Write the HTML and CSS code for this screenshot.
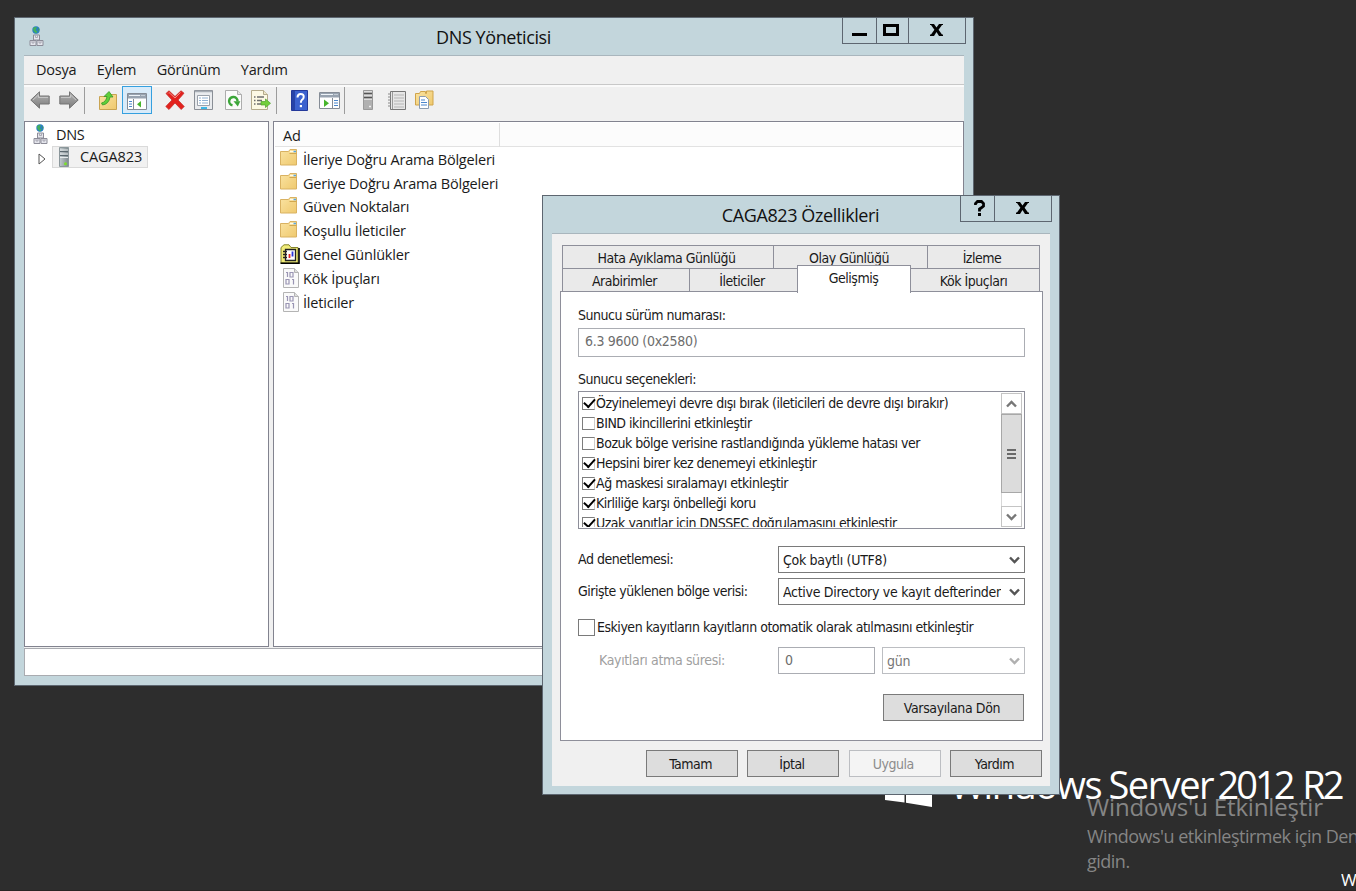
FILE: index.html
```
<!DOCTYPE html>
<html lang="tr">
<head>
    <meta charset="UTF-8">
    <meta name="viewport" content="width=device-width, initial-scale=1.0">
    <title>DNS Yöneticisi</title>
    <link rel="stylesheet" href="styles.css">
</head>
<body>
    <!-- shared icons -->
    <svg class="defs" width="0" height="0">
        <defs>
            <linearGradient id="gold" x1="0" y1="0" x2="1" y2="1">
                <stop offset="0" stop-color="#fae3a2"/>
                <stop offset="1" stop-color="#efc96e"/>
            </linearGradient>
            <linearGradient id="steel" x1="0" y1="0" x2="1" y2="0">
                <stop offset="0" stop-color="#c3cbce"/>
                <stop offset="1" stop-color="#7e898d"/>
            </linearGradient>
            <linearGradient id="grey" x1="0" y1="0" x2="0" y2="1">
                <stop offset="0" stop-color="#b4b4b4"/>
                <stop offset="1" stop-color="#7c7c7c"/>
            </linearGradient>
        </defs>
        <symbol id="i-dns" viewBox="0 0 16 20">
            <circle cx="7" cy="4" r="3.7" fill="#2a7fc4"/>
            <path d="M4 2.400Q6 0 8 1.600L6.600 4 8.500 5.500 7 7.600 4.500 5Z" fill="#43b05c"/>
            <path d="M9 2l1.500 1.500-1 2Z" fill="#3f9f58"/>
            <path d="M4.500 9h6v5h-6ZM1 14.500h6v5H1ZM8 14.500h6v5H8Z" fill="#e4e5ec" stroke="#8c8c98"/>
            <path d="M6.500 9.500v2h2v-2M3 15v2h2v-2M10 15v2h2v-2" fill="none" stroke="#9a9aa6" stroke-width=".8"/>
        </symbol>
        <symbol id="i-folder" viewBox="0 0 18 17">
            <path d="M.5 2.500h8l1.500-2h6.500v15.500H.5Z" fill="url(#gold)" stroke="#d9b262"/>
            <path d="M9.500 4.500h7" stroke="#d2a84f"/>
            <path d="M10 2.500h6" stroke="#fffbe8" stroke-width="1.500"/>
            <path d="M13.500 2.500h2.500" stroke="#5aa7dd" stroke-width="1.500"/>
        </symbol>
        <symbol id="i-server" viewBox="0 0 14 20">
            <path d="M2.500.5h9v19h-9Z" fill="url(#steel)" stroke="#8b979b"/>
            <path d="M3 4.500h8M3 8.500h8" stroke="#5b686e"/>
            <path d="M3 3h8M3 7h8M3 10.500h8" stroke="#e6ebec"/>
            <circle cx="8.500" cy="16.800" r="1.500" fill="#7be02a"/>
        </symbol>
        <symbol id="i-doc" viewBox="0 0 16 20">
            <path d="M.5.5h11l4 4v15H.5Z" fill="#fafafa" stroke="#b4b4b4"/>
            <path d="M11.500.5v4h4" fill="#dedede" stroke="#b4b4b4"/>
            <path d="M3 4.500h1.500v4.500M7 4.500h3v4.500h-3ZM3 11.500h3v4.500H3ZM9 11.500h1.500v5" fill="none" stroke="#9a95b4" stroke-width="1.200"/>
        </symbol>
        <symbol id="i-log" viewBox="0 0 20 20">
            <path d="M1 3.500 4 .8h5l2 2.700h7V19H1Z" fill="#f1ec7a" stroke="#85852a"/>
            <path d="M.5 19.200h18.500V4" fill="none" stroke="#000" stroke-width="1.600"/>
            <path d="M5.500 5.500h10v11h-10Z" fill="#fff" stroke="#222" stroke-width="1.300"/>
            <path d="M3 7.500h4M3 10.500h4M3 13.500h4" stroke="#222" stroke-width="1.300"/>
            <path d="M9.500 10v4" stroke="#e02424" stroke-width="1.800"/>
            <path d="M12.500 7.500v5" stroke="#2b35d8" stroke-width="1.800"/>
        </symbol>
        <symbol id="i-arrow" viewBox="0 0 20 18">
            <path d="M.8 9 9.500.8v4.200h9.700v8H9.500v4.200Z" fill="url(#grey)" stroke="#747474"/>
            <path d="M3 9 8.500 4v2.500h9.500" fill="none" stroke="#c4c4c4"/>
        </symbol>
        <symbol id="i-chev" viewBox="0 0 11 8">
            <path d="M1 1.500 5.500 6 10 1.500" fill="none" stroke="currentColor" stroke-width="2.400"/>
        </symbol>
        <symbol id="i-x" viewBox="0 0 13 12">
            <path d="M0 0h4l2.500 3.500L9 0h4v1h-1L8.600 5.800 12 10.500h1V12H9L6.500 8 4 12H0v-1.500h1L4.400 5.800 1 1H0Z" fill="#000"/>
        </symbol>
    </svg>

    <div class="desktop">
        <div class="brand">
            <svg class="flag" width="48" height="48" viewBox="0 0 48 48">
                <path d="M0 6.500 19.500 4v19H0ZM21 3.800 47 0v23H21ZM0 24.500h19.500v19L0 41ZM21 24.500h26V48l-26-4.200Z" fill="#fff"/>
            </svg>
            <span class="brand-name">Windows Server <span class="brand-year">2012 R2</span></span>
        </div>
        <div class="activate">
            <div class="activate-title">Windows'u Etkinleştir</div>
            <div class="activate-text">Windows'u etkinleştirmek için Denetim</div>
            <div class="activate-text">gidin.</div>
        </div>
        <div class="build">Windows</div>
    </div>

    <div class="window main-window">
        <div class="titlebar">
            <svg class="title-icon" width="16" height="20"><use href="#i-dns"/></svg>
            <span class="title">DNS Yöneticisi</span>
            <div class="caption-buttons">
                <button class="cap cap-min"><svg width="15" height="12"><path d="M0 10.500h15" stroke="#000" stroke-width="3"/></svg></button>
                <button class="cap cap-max"><svg width="16" height="12"><path d="M1.500 1.500h13v9h-13Z" fill="none" stroke="#000" stroke-width="3"/></svg></button>
                <button class="cap cap-close"><svg width="13" height="12"><use href="#i-x"/></svg></button>
            </div>
        </div>
        <div class="client">
            <div class="menubar">
                <span>Dosya</span>
                <span>Eylem</span>
                <span>Görünüm</span>
                <span>Yardım</span>
            </div>
            <div class="toolbar">
                <div class="tool"><svg width="20" height="18"><use href="#i-arrow"/></svg></div>
                <div class="tool flip"><svg width="20" height="18"><use href="#i-arrow"/></svg></div>
                <div class="sep"></div>
                <div class="tool tool-up">
                    <svg width="18" height="19" viewBox="0 0 18 19">
                        <path d="M.5 5.500h8l2-2h7v15H.5Z" fill="url(#gold)" stroke="#c9a452"/>
                        <path d="M2.500 12Q7 11 8 5.500H5L10 .5l4 5.500h-3Q10 13 3.500 14Z" fill="#5fd038" stroke="#39962a" stroke-width=".8"/>
                    </svg>
                </div>
                <div class="tool tool-on">
                    <svg width="20" height="17" viewBox="0 0 20 17">
                        <path d="M.5.5h19v16H.5Z" fill="#fff" stroke="#858c96"/>
                        <path d="M1 1h18v4.500H1Z" fill="#98a3b0"/>
                        <path d="M2 2.500h11M14.500 2.500h1M16.500 2.500h1" stroke="#eef3f8"/>
                        <path d="M6.500 6v10" stroke="#858c96"/>
                        <path d="M2 8.500h3M2 11h3M2 13.500h3" stroke="#4b86cc" stroke-width="1.200"/>
                        <path d="M14 8v6.500l-4-3.200Z" fill="#47b52c"/>
                    </svg>
                </div>
                <div class="tool tool-del">
                    <svg width="20" height="20" viewBox="0 0 20 20"><path d="M1 3.500 4 .8 10 6.500 16 .8l3 2.400L13 10l6.200 6.500-3 3L10 13l-6 6.500-3.200-3L7 10Z" fill="#e3211d" stroke="#c5302c" stroke-width=".8"/><path d="M3 3.500 4 2.500 10 8 15.500 2.500" fill="none" stroke="#f28a84"/></svg>
                </div>
                <div class="tool tool-prop">
                    <svg width="19" height="20" viewBox="0 0 19 20">
                        <path d="M.5.5h18v19H.5Z" fill="#e9ebee" stroke="#8a8f96"/>
                        <path d="M1 1.500h17" stroke="#a7adb5" stroke-width="1.500"/>
                        <path d="M3.500 5.500h12v10h-12Z" fill="#fff" stroke="#9aa1aa"/>
                        <path d="M5 8h2M8 8h6M5 10.500h2M8 10.500h6M5 13h2M8 13h6" stroke="#8fb0d2"/>
                        <path d="M7 18h6" stroke="#3bb6e6" stroke-width="2"/>
                    </svg>
                </div>
                <div class="tool tool-ref">
                    <svg width="17" height="20" viewBox="0 0 17 20">
                        <path d="M.5.5h12l4 4v15H.5Z" fill="#fbfbfb" stroke="#adadad"/>
                        <path d="M12.500.5v4h4" fill="#e4e4e4" stroke="#adadad"/>
                        <path d="M7.500 15.300A4.200 4.200 0 1 1 12.500 11.500" fill="none" stroke="#3da63a" stroke-width="2.500"/>
                        <path d="M8.500 11.200h6.800L12.800 16.500Z" fill="#3da63a"/>
                    </svg>
                </div>
                <div class="tool tool-exp">
                    <svg width="20" height="20" viewBox="0 0 20 20">
                        <path d="M.5.5h12l4 4v15H.5Z" fill="#fdf9e4" stroke="#b5ab8c"/>
                        <path d="M12.500.5v4h4" fill="#eee6c8" stroke="#b5ab8c"/>
                        <path d="M3 7h1.500M6 7h7M3 10.500h1.500M6 10.500h5M3 14h1.500M6 14h5" stroke="#6d6d6d" stroke-width="1.300"/>
                        <path d="M10 11.500h4.500V9l5 4.300-5 4.200V15H10Z" fill="#74cf3a" stroke="#4ea22a" stroke-width=".7"/>
                    </svg>
                </div>
                <div class="sep"></div>
                <div class="tool tool-help">
                    <svg width="17" height="21" viewBox="0 0 17 21">
                        <path d="M.5.5h16v20H.5Z" fill="#3c62cf" stroke="#24399a"/>
                        <path d="M1 1h3v19H1Z" fill="#2743a8"/>
                        <path d="M6.500 7.500q0-3.500 3.200-3.500t3 3q0 2-2 3.200-.8.600-.8 2.600" fill="none" stroke="#fff" stroke-width="2"/>
                        <path d="M8.800 15h2.200v2.200H8.800Z" fill="#fff"/>
                    </svg>
                </div>
                <div class="tool tool-act">
                    <svg width="21" height="17" viewBox="0 0 21 17">
                        <path d="M.5.5h20v16H.5Z" fill="#fff" stroke="#858c96"/>
                        <path d="M1 1h19v4.500H1Z" fill="#98a3b0"/>
                        <path d="M2 2.500h12M15.500 2.500h1M17.500 2.500h1" stroke="#eef3f8"/>
                        <path d="M13.500 6v10" stroke="#858c96"/>
                        <path d="M15 8.500h4M15 11h4M15 13.500h4" stroke="#4b86cc" stroke-width="1.200"/>
                        <path d="M5 7.500V15l5-3.700Z" fill="#47b52c"/>
                    </svg>
                </div>
                <div class="sep sep-3"></div>
                <div class="tool tool-srv">
                    <svg width="12" height="20" viewBox="0 0 12 20">
                        <path d="M1.500.5h9v19h-9Z" fill="#b0b0b0" stroke="#999"/>
                        <path d="M2 3.500h8M2 7.500h8" stroke="#555"/>
                        <path d="M2 1.500h8M2 5.500h8M2 9.500h8" stroke="#ddd"/>
                        <path d="M7 16.500h2" stroke="#eee" stroke-width="1.500"/>
                    </svg>
                </div>
                <div class="tool tool-book">
                    <svg width="18" height="19" viewBox="0 0 18 19">
                        <path d="M2.500.5h15v18h-15Z" fill="#e6e6e6" stroke="#777"/>
                        <path d="M4.500 1v17" stroke="#999"/>
                        <path d="M6 4h10M6 7h10M6 10h10M6 13h10M6 16h10" stroke="#b4b4b4"/>
                        <path d="M0 3h3M0 6h3M0 9h3M0 12h3M0 15h3" stroke="#888"/>
                    </svg>
                </div>
                <div class="tool tool-copy">
                    <svg width="19" height="20" viewBox="0 0 19 20">
                        <path d="M.5 3.500h4l1-2h5v2h1V1h6.500v14H.5Z" fill="url(#gold)" stroke="#d0a44a"/>
                        <path d="M4.500 6.500h6l3 3v9h-9Z" fill="#fff" stroke="#8b9cb0"/>
                        <path d="M6 10h4M6 12.500h6M6 15h6" stroke="#4b86cc" stroke-width="1.200"/>
                    </svg>
                </div>
            </div>
            <div class="panes">
                <div class="tree">
                    <div class="tree-row">
                        <svg width="16" height="20"><use href="#i-dns"/></svg>
                        <span>DNS</span>
                    </div>
                    <div class="tree-row tree-child">
                        <svg class="expander" width="8" height="12" viewBox="0 0 8 12"><path d="M1 1v10l6-5Z" fill="#fff" stroke="#555"/></svg>
                        <div class="tree-sel">
                            <svg width="14" height="20"><use href="#i-server"/></svg>
                            <span>CAGA823</span>
                        </div>
                    </div>
                </div>
                <div class="list">
                    <div class="list-head"><span>Ad</span></div>
                    <div class="list-row"><svg width="18" height="17"><use href="#i-folder"/></svg><span>İleriye Doğru Arama Bölgeleri</span></div>
                    <div class="list-row"><svg width="18" height="17"><use href="#i-folder"/></svg><span>Geriye Doğru Arama Bölgeleri</span></div>
                    <div class="list-row"><svg width="18" height="17"><use href="#i-folder"/></svg><span>Güven Noktaları</span></div>
                    <div class="list-row"><svg width="18" height="17"><use href="#i-folder"/></svg><span>Koşullu İleticiler</span></div>
                    <div class="list-row"><svg class="log" width="20" height="20"><use href="#i-log"/></svg><span>Genel Günlükler</span></div>
                    <div class="list-row"><svg class="doc" width="16" height="20"><use href="#i-doc"/></svg><span>Kök İpuçları</span></div>
                    <div class="list-row"><svg class="doc" width="16" height="20"><use href="#i-doc"/></svg><span>İleticiler</span></div>
                </div>
            </div>
            <div class="statusbar"></div>
        </div>
    </div>

    <div class="window dialog">
        <div class="titlebar">
            <span class="title">CAGA823 Özellikleri</span>
            <div class="caption-buttons">
                <button class="cap cap-help"><svg width="11" height="16" viewBox="0 0 11 16"><path d="M1.500 5V3.500L3.500 1.500h4l2 2v2.500L7 8 5.500 9v2.500" fill="none" stroke="#000" stroke-width="2.800"/><path d="M4 13h3v3H4Z"/></svg></button>
                <button class="cap cap-close"><svg width="13" height="12"><use href="#i-x"/></svg></button>
            </div>
        </div>
        <div class="dialog-client">
            <div class="tabs">
                <div class="tab-row">
                    <div class="tab t1">Hata Ayıklama Günlüğü</div>
                    <div class="tab t2">Olay Günlüğü</div>
                    <div class="tab t3">İzleme</div>
                </div>
                <div class="tab-row">
                    <div class="tab t4">Arabirimler</div>
                    <div class="tab t5">İleticiler</div>
                    <div class="tab t6 active">Gelişmiş</div>
                    <div class="tab t7">Kök İpuçları</div>
                </div>
            </div>
            <div class="panel">
                <div class="label l1">Sunucu sürüm numarası:</div>
                <div class="field version">6.3 9600 (0x2580)</div>
                <div class="label l2">Sunucu seçenekleri:</div>
                <div class="listbox">
                    <div class="options">
                        <div class="option"><i class="box on"></i><span>Özyinelemeyi devre dışı bırak (ileticileri de devre dışı bırakır)</span></div>
                        <div class="option"><i class="box"></i><span>BIND ikincillerini etkinleştir</span></div>
                        <div class="option"><i class="box"></i><span>Bozuk bölge verisine rastlandığında yükleme hatası ver</span></div>
                        <div class="option"><i class="box on"></i><span>Hepsini birer kez denemeyi etkinleştir</span></div>
                        <div class="option"><i class="box on"></i><span>Ağ maskesi sıralamayı etkinleştir</span></div>
                        <div class="option"><i class="box on"></i><span>Kirliliğe karşı önbelleği koru</span></div>
                        <div class="option"><i class="box on"></i><span>Uzak yanıtlar için DNSSEC doğrulamasını etkinleştir</span></div>
                    </div>
                    <div class="scrollbar">
                        <div class="sb-btn"><svg class="up" width="11" height="8"><use href="#i-chev"/></svg></div>
                        <div class="sb-thumb"><i></i><i></i><i></i></div>
                        <div class="sb-track"></div>
                        <div class="sb-btn"><svg width="11" height="8"><use href="#i-chev"/></svg></div>
                    </div>
                </div>
                <div class="form-row r1">
                    <span class="form-label">Ad denetlemesi:</span>
                    <div class="combo"><span>Çok baytlı (UTF8)</span><svg width="11" height="8"><use href="#i-chev"/></svg></div>
                </div>
                <div class="form-row r2">
                    <span class="form-label">Girişte yüklenen bölge verisi:</span>
                    <div class="combo"><span>Active Directory ve kayıt defterinden</span><svg width="11" height="8"><use href="#i-chev"/></svg></div>
                </div>
                <div class="check-row"><i class="check"></i><span>Eskiyen kayıtların kayıtların otomatik olarak atılmasını etkinleştir</span></div>
                <div class="form-row r3 disabled">
                    <span class="form-label">Kayıtları atma süresi:</span>
                    <div class="field days">0</div>
                    <div class="combo unit"><span>gün</span><svg width="11" height="8"><use href="#i-chev"/></svg></div>
                </div>
                <button class="btn btn-reset">Varsayılana Dön</button>
            </div>
            <div class="buttons">
                <button class="btn">Tamam</button>
                <button class="btn">İptal</button>
                <button class="btn" disabled>Uygula</button>
                <button class="btn">Yardım</button>
            </div>
        </div>
    </div>
</body>
</html>
```
FILE: styles.css
```
* {
    box-sizing: border-box;
}
body {
    margin: 0;
    width: 1356px;
    height: 891px;
    overflow: hidden;
    position: relative;
    background-color: #2d2d2d;
    font-family: "Open Sans", "Noto Sans", sans-serif;
    font-size: 14.5px;
    color: #1a1a1a;
    white-space: nowrap;
}
svg {
    display: block;
    flex: none;
}
.defs {
    position: absolute;
}
button {
    font: inherit;
    letter-spacing: inherit;
    color: inherit;
    border-radius: 0;
    padding: 0;
}

/* desktop */
.desktop {
    position: relative;
    height: 891px;
    overflow: hidden;
    border-bottom: 1px solid #292424;
}
.brand {
    position: absolute;
    left: 885px;
    top: 759px;
    display: flex;
    color: #fff;
}
.brand-name {
    margin-left: 17px;
    line-height: 50px;
    font-size: 38px;
    letter-spacing: -1.5px;
    word-spacing: -1px;
}
.brand-year {
    margin-left: -3px;
    letter-spacing: -3px;
    word-spacing: 3px;
}
.activate {
    position: absolute;
    left: 1087px;
    top: 790px;
    width: 269px;
    overflow: hidden;
    color: #858585;
}
.activate-title {
    font-size: 24px;
    line-height: 34px;
    letter-spacing: -0.15px;
}
.activate-text {
    font-size: 18px;
    line-height: 25px;
    letter-spacing: -0.5px;
}
.build {
    position: absolute;
    left: 1341px;
    top: 867px;
    width: 15px;
    overflow: hidden;
    font-size: 17px;
    line-height: 25px;
    color: #fff;
}

/* windows */
.window {
    position: absolute;
    background-color: #c3d6dc;
    border: 1px solid #5d6670;
}
.main-window {
    left: 14px;
    top: 17px;
    width: 960px;
    height: 669px;
    padding: 0 9px 9px;
}
.dialog {
    left: 542px;
    top: 195px;
    width: 518px;
    height: 600px;
    padding: 0 9px 8px;
    font-family: "DejaVu Sans Condensed", "DejaVu Sans", sans-serif;
    font-stretch: condensed;
    font-size: 14px;
    letter-spacing: -0.48px;
}
.titlebar {
    position: relative;
    display: flex;
    justify-content: center;
    height: 37px;
}
.title-icon {
    position: absolute;
    left: 5px;
    top: 8px;
}
.title {
    margin-left: -1px;
    font-family: "Open Sans", "Noto Sans", sans-serif;
    font-size: 18px;
    font-stretch: normal;
    line-height: 38px;
    letter-spacing: -0.4px;
    color: #111;
}
.caption-buttons {
    position: absolute;
    right: -2px;
    top: -1px;
    display: flex;
}
.cap {
    display: flex;
    justify-content: center;
    align-items: center;
    height: 27px;
    padding: 0 2px 1px 0;
    border: 1px solid #5d6670;
    background-color: #c3d6dc;
}
.cap + .cap {
    border-left: none;
}
.cap-min {
    width: 35px;
    padding-right: 0;
}
.cap-max {
    width: 32px;
    padding-right: 3px;
}
.cap-close {
    width: 57px;
}
.cap-help {
    width: 35px;
    padding: 0 0 1px 3px;
}
.client {
    height: 621px;
    border-top: 1px solid #a9b6bd;
    background-color: #f0f0f0;
    display: flex;
    flex-direction: column;
}
.menubar {
    display: flex;
    height: 29px;
    padding-left: 12px;
    border-bottom: 1px solid #c8c8c8;
    line-height: 27px;
    letter-spacing: -0.2px;
}
.menubar span {
    margin-right: 20.3px;
}
.toolbar {
    display: flex;
    align-items: center;
    height: 36px;
    padding: 0 0 8px 6px;
    border-top: 2px solid #fafafa;
}
.tool {
    margin-right: 9px;
}
.flip {
    transform: scaleX(-1);
    margin-right: 5px;
}
.sep {
    width: 1px;
    height: 27px;
    margin-right: 14px;
    background-color: #9c9c9c;
}
.tool-up {
    margin-right: 5px;
}
.tool-on {
    display: flex;
    align-items: center;
    justify-content: center;
    width: 30px;
    height: 28px;
    padding-top: 2px;
    margin-right: 13px;
    border: 1px solid #35a0df;
    background-color: #d9ebf9;
}
.tool-prop {
    margin-right: 12px;
}
.tool-exp {
    margin-right: 5px;
}
.tool-help {
    margin-right: 11px;
}
.tool-act {
    margin-right: 4px;
}
.sep-3 {
    margin-right: 17px;
}
.tool-srv {
    margin-right: 14px;
}
.panes {
    display: flex;
    gap: 4px;
    height: 526px;
}
.tree {
    width: 245px;
    border: 1px solid #82838f;
    background-color: #fff;
}
.tree-row {
    display: flex;
    align-items: center;
    height: 23px;
    padding: 1px 0 0 8px;
    gap: 7px;
    letter-spacing: -0.3px;
}
.tree-child {
    padding-left: 13px;
    gap: 6px;
}
.expander {
    margin-top: 3px;
}
.tree-sel {
    display: flex;
    align-items: center;
    gap: 9px;
    width: 96px;
    height: 22px;
    padding: 0 0 1px 4px;
    border: 1px solid #dadada;
    background-color: #f1f1f1;
    letter-spacing: -0.1px;
}
.list {
    flex: 1;
    padding: 1px;
    border: 1px solid #82838f;
    background-color: #fff;
    letter-spacing: -0.2px;
}
.list-head {
    height: 24px;
    border-bottom: 1px solid #e2e2e2;
    background-color: #fcfcfc;
}
.list-head span {
    display: block;
    width: 225px;
    height: 24px;
    padding-left: 8px;
    line-height: 25px;
    border-right: 1px solid #dedede;
}
.list-row {
    display: flex;
    align-items: center;
    height: 23.8px;
    padding-left: 5px;
}
.list-row svg {
    margin: -2px 5px 0 0;
}
.list-row span {
    padding-top: 1px;
}
.list-row svg.log {
    margin: 0 3px 0 0;
}
.list-row svg.doc {
    margin: 0 4px 0 3px;
}
.statusbar {
    flex: 1;
    margin-top: 1px;
    border: 1px solid #a9abb0;
    background-color: #fff;
}

/* properties dialog */
.dialog-client {
    height: 553px;
    padding: 11px 7px 0 8px;
    border-top: 1px solid #a9b6bd;
    background-color: #f0f0f0;
}
.tabs {
    padding: 0 2px;
}
.tab-row {
    display: flex;
    height: 23px;
}
.tab {
    height: 24px;
    padding-right: 3px;
    border: 1px solid #8e8f9a;
    margin-right: -1px;
    background-color: #eaeaea;
    line-height: 24px;
    text-align: center;
}
.t1 {
    width: 212px;
}
.t2 {
    width: 155px;
}
.t3 {
    width: 113px;
}
.t4 {
    width: 128px;
}
.t5 {
    width: 109px;
}
.t6 {
    width: 114px;
}
.t7 {
    width: 130px;
}
.tab.active {
    position: relative;
    top: -3px;
    height: 28px;
    padding-right: 1px;
    border-bottom: none;
    background-color: #fff;
}
.panel {
    height: 450px;
    padding: 13px 17px 0;
    border: 1px solid #8e8f9a;
    background-color: #fff;
}
.label {
    height: 23px;
    line-height: 21px;
}
.field {
    border: 1px solid #abadb3;
    color: #6d6d6d;
}
.version {
    height: 29px;
    padding-left: 6px;
    line-height: 24px;
    letter-spacing: -0.3px;
}
.l2 {
    margin-top: 12px;
    height: 22px;
}
.listbox {
    display: flex;
    justify-content: space-between;
    height: 138px;
    border: 1px solid #8e8f9a;
    padding: 1px 2px 1px 3px;
}
.options {
    overflow: hidden;
}
.option {
    display: flex;
    align-items: center;
    height: 20px;
}
.box {
    width: 13px;
    height: 13px;
    margin-right: 1px;
    border: 1px solid #7d7d7d;
    border-right-color: #ccc;
    background-color: #fff;
}
.box.on::after {
    content: "";
    display: block;
    width: 5px;
    height: 9px;
    margin: -1px 0 0 3px;
    border: solid #000;
    border-width: 0 2.500px 2.500px 0;
    transform: rotate(42deg) translate(-0.5px, -0.5px);
}
.scrollbar {
    display: flex;
    flex-direction: column;
    width: 21px;
}
.sb-btn {
    display: flex;
    align-items: center;
    justify-content: center;
    height: 21px;
    border: 1px solid #c4c4c4;
    color: #777;
}
.up {
    transform: scaleY(-1);
}
.sb-thumb {
    display: flex;
    flex-direction: column;
    align-items: center;
    justify-content: center;
    gap: 2px;
    height: 79px;
    border: 1px solid #a8a8a8;
    background-color: #dcdcdc;
}
.sb-thumb i {
    width: 9px;
    height: 2px;
    background-color: #6a6a6a;
}
.sb-track {
    flex: 1;
    border: solid #d8d8d8;
    border-width: 0 1px;
}
.form-row {
    display: flex;
    height: 27px;
}
.r1 {
    margin-top: 17px;
}
.r2 {
    margin-top: 5px;
}
.form-label {
    width: 200px;
    line-height: 26px;
}
.combo {
    display: flex;
    align-items: center;
    width: 247px;
    padding: 0 4px 0 4px;
    border: 1px solid #7a7a7a;
    color: #1a1a1a;
    letter-spacing: -0.3px;
}
.combo span {
    flex: 1;
    margin-right: 8px;
    overflow: hidden;
}
.combo svg {
    color: #555;
}
.check-row {
    display: flex;
    align-items: center;
    height: 18px;
    margin-top: 13px;
}
.check {
    width: 17px;
    height: 17px;
    margin-right: 2px;
    border: 1px solid #7a7a7a;
}
.r3 {
    margin-top: 11px;
}
.disabled .form-label {
    padding-left: 21px;
    letter-spacing: -0.35px;
    color: #a0a0a0;
}
.days {
    width: 97px;
    margin-right: 7px;
    padding-left: 6px;
    line-height: 25px;
}
.unit {
    width: 143px;
    border-color: #bcbec2;
    color: #777;
}
.unit svg {
    color: #b0b0b0;
}
.btn {
    width: 92px;
    height: 27px;
    padding-right: 3px;
    border: 1px solid #7a7a7a;
    background-color: #dddddd;
}
.btn:disabled {
    border-color: #bcbec2;
    background-color: #f4f4f4;
    color: #8c8c8c;
}
.btn-reset {
    display: block;
    width: 141px;
    margin: 20px 1px 0 auto;
    letter-spacing: -0.38px;
}
.buttons {
    display: flex;
    justify-content: flex-end;
    gap: 9.3px;
    padding: 9px 1px 0 0;
}
```
